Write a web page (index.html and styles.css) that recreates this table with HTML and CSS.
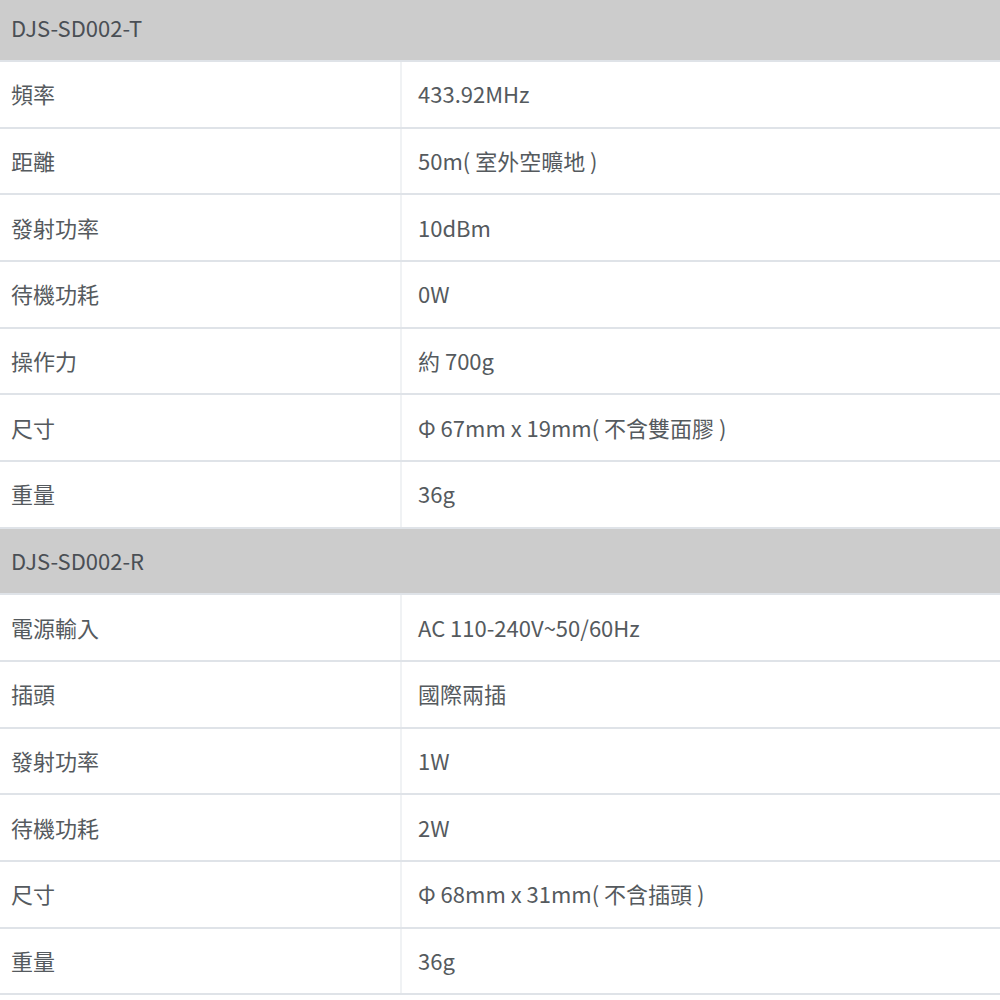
FILE: index.html
```html
<!DOCTYPE html>
<html lang="zh-Hant">
<head>
<meta charset="utf-8">
<link rel="stylesheet" href="styles.css">
</head>
<body>
<div class="spec">
  <div class="row head first"><div class="cell">DJS-SD002-T</div></div>
  <div class="row"><div class="cell key">頻率</div><div class="cell val">433.92MHz</div></div>
  <div class="row"><div class="cell key">距離</div><div class="cell val">50m( 室外空曠地 )</div></div>
  <div class="row"><div class="cell key">發射功率</div><div class="cell val">10dBm</div></div>
  <div class="row"><div class="cell key">待機功耗</div><div class="cell val">0W</div></div>
  <div class="row"><div class="cell key">操作力</div><div class="cell val">約 700g</div></div>
  <div class="row"><div class="cell key">尺寸</div><div class="cell val">Φ 67mm x 19mm( 不含雙面膠 )</div></div>
  <div class="row"><div class="cell key">重量</div><div class="cell val">36g</div></div>
  <div class="row head"><div class="cell">DJS-SD002-R</div></div>
  <div class="row"><div class="cell key">電源輸入</div><div class="cell val">AC 110-240V~50/60Hz</div></div>
  <div class="row"><div class="cell key">插頭</div><div class="cell val">國際兩插</div></div>
  <div class="row"><div class="cell key">發射功率</div><div class="cell val">1W</div></div>
  <div class="row"><div class="cell key">待機功耗</div><div class="cell val">2W</div></div>
  <div class="row"><div class="cell key">尺寸</div><div class="cell val">Φ 68mm x 31mm( 不含插頭 )</div></div>
  <div class="row"><div class="cell key">重量</div><div class="cell val">36g</div></div>
</div>
</body>
</html>
```
FILE: styles.css
```css
html, body {
  margin: 0;
  padding: 0;
  background: #ffffff;
}
body {
  font-family: "Noto Sans CJK TC", "Noto Sans", sans-serif;
  font-size: 22px;
  color: #555a5e;
}
.spec {
  display: flex;
  flex-direction: column;
}
.row {
  display: grid;
  grid-template-columns: 400px 1fr;
  height: 66.67px;
  box-sizing: border-box;
  border-bottom: 2px solid #dfe3e8;
}
.row.first {
  height: 62px;
}
.row.head {
  background: #cccccc;
  grid-template-columns: 1fr;
}
.cell {
  display: flex;
  align-items: center;
  padding-left: 11px;
  padding-bottom: 2px;
  white-space: nowrap;
}
.first .cell {
  padding-bottom: 7px;
}
.head .cell {
  color: #4a4f55;
}
.val {
  border-left: 2px solid #f0f2f4;
  padding-left: 16px;
}
```
